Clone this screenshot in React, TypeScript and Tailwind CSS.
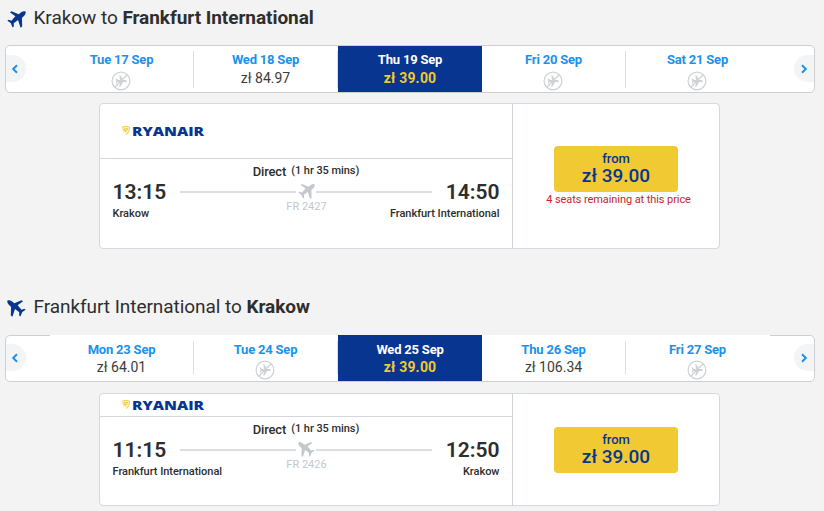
import clsx from "clsx";

type Fare = { date: string; price?: string; selected?: boolean };

type Trip = {
  from: string;
  to: string;
  inbound?: boolean;
  fares: Fare[];
  departs: string;
  arrives: string;
  flight: string;
  price: string;
  seats?: string;
};

const OUTBOUND: Trip = {
  from: "Krakow",
  to: "Frankfurt International",
  fares: [
    { date: "Tue 17 Sep" },
    { date: "Wed 18 Sep", price: "zł 84.97" },
    { date: "Thu 19 Sep", price: "zł 39.00", selected: true },
    { date: "Fri 20 Sep" },
    { date: "Sat 21 Sep" },
  ],
  departs: "13:15",
  arrives: "14:50",
  flight: "FR 2427",
  price: "zł 39.00",
  seats: "4 seats remaining at this price",
};

const INBOUND: Trip = {
  from: "Frankfurt International",
  to: "Krakow",
  inbound: true,
  fares: [
    { date: "Mon 23 Sep", price: "zł 64.01" },
    { date: "Tue 24 Sep" },
    { date: "Wed 25 Sep", price: "zł 39.00", selected: true },
    { date: "Thu 26 Sep", price: "zł 106.34" },
    { date: "Fri 27 Sep" },
  ],
  departs: "11:15",
  arrives: "12:50",
  flight: "FR 2426",
  price: "zł 39.00",
};

function Plane({ className, inbound }: { className?: string; inbound?: boolean }) {
  return (
    <svg viewBox="0 0 20 20" className={clsx("shrink-0", className)} fill="currentColor">
      <g transform={inbound ? "translate(20 0) scale(-1 1)" : undefined}>
        <path d="M19.500 1.700c-1.200-.8-2.900-.4-4.200.5L12.300 4.400 4.800 1.200 3.100 2.300l5.700 4.300-4.100 4.600-3-.9-1.300.9 3.500 2.500 2 4.700 1.300-1-.1-3.500 4.500-3.300 2.700 8.100 1.700-1.300-.3-9.100 2.600-2.500c1.200-1.200 1.600-2.900 1.200-4.100z" />
      </g>
    </svg>
  );
}

function NoFlight() {
  return (
    <svg viewBox="0 0 20 20" className="size-5 shrink-0 text-[#cfd2d5]" fill="none" stroke="currentColor">
      <circle cx="10" cy="10" r="8.900" strokeWidth="1.200" />
      <path
        fill="currentColor"
        stroke="none"
        d="M15.800 10c0-.7-.7-1.100-1.500-1.100h-2.200L9.500 4.600H8.200l1.100 4.300H6.900L5.800 7.500h-1l.6 2.500-.6 2.500h1l1.100-1.400h2.400l-1.100 4.300h1.300l2.600-4.300h2.200c.8 0 1.500-.4 1.500-1.100z"
      />
      <path d="M4 16 16 4" strokeWidth="1.200" />
    </svg>
  );
}

function Logo() {
  return (
    <div className="flex items-center">
      <svg viewBox="0 0 11 12" className="h-3 w-[11px]">
        <path d="M1 2.200Q5 .2 9 2.200 9.200 6.500 5.400 10 2 7 1 2.200z" fill="#fdf6da" />
        <path
          d="M.8 2.200Q5 .4 8.700 2.200L8 6 5.400 9.800M1.200 3.500l2.300 3M2.500 5l3.500.3 1-1.800-4-.3L5 7.500"
          fill="none"
          stroke="#f1c933"
          strokeWidth=".9"
        />
      </svg>
      <svg viewBox="0 0 73 20" className="h-5 w-[73px]">
        <text
          x="0"
          y="14.500"
          textLength="72"
          lengthAdjust="spacingAndGlyphs"
          fill="#073590"
          className="font-['Open_Sans',sans-serif] text-[12px] font-extrabold"
        >
          RYANAIR
        </text>
      </svg>
    </div>
  );
}

function NavButton({ next, inbound }: { next?: boolean; inbound?: boolean }) {
  return (
    <div className={clsx("flex flex-1 items-center", next && "justify-end", inbound ? "pb-0.5" : "pb-px")}>
      <button
        className={clsx(
          "flex h-[27px] w-5 items-center bg-[#f3f4f6]",
          next ? "justify-center rounded-l-full" : "rounded-r-full pl-[5px]",
        )}
      >
        <svg
          viewBox="0 0 8 10"
          className={clsx("h-2.5 w-2", next && "rotate-180")}
          fill="none"
          stroke="#2091eb"
          strokeWidth="2"
        >
          <path d="M6 1.200 2.200 5 6 8.800" />
        </svg>
      </button>
    </div>
  );
}

function DateStrip({ fares, inbound }: { fares: Fare[]; inbound?: boolean }) {
  return (
    <div
      className={clsx(
        "ml-[5px] flex w-[810px] rounded-[5px] border border-[#cdcfd3] bg-white",
        inbound ? "h-[47px]" : "h-12",
      )}
    >
      <NavButton inbound={inbound} />
      {fares.map((fare, i) => (
        <div
          key={fare.date}
          className={clsx(
            "flex w-36 shrink-0 justify-center",
            inbound && "-mt-px",
            fare.selected ? "bg-[#073590]" : "bg-white",
          )}
        >
          <div
            className={clsx(
              "flex flex-1 flex-col items-center",
              inbound ? "mt-1.5 h-[33px]" : "mt-[5px] h-[37px]",
              !fare.selected && "border-r",
              i < 4 ? "border-[#dcdee2]" : "border-transparent",
            )}
          >
            <span
              className={clsx(
                "text-[13px] leading-[18px] font-bold tracking-[-0.2px]",
                fare.selected ? "text-white" : "text-[#2091eb]",
              )}
            >
              {fare.date}
            </span>
            {fare.price ? (
              <span
                className={clsx(
                  "text-sm",
                  inbound ? "leading-[17px]" : "leading-[19px]",
                  fare.selected ? "font-bold tracking-[0.2px] text-[#f1c933]" : "text-[#3c3c3c]",
                )}
              >
                {fare.price}
              </span>
            ) : (
              <div className={clsx("-mb-1 pr-px", inbound ? "mt-px" : "mt-0.5")}>
                <NoFlight />
              </div>
            )}
          </div>
        </div>
      ))}
      <NavButton next inbound={inbound} />
    </div>
  );
}

function FlightCard({ trip }: { trip: Trip }) {
  const { inbound } = trip;
  return (
    <div
      className={clsx(
        "ml-[99px] flex w-[621px] rounded border border-[#d4d8df] bg-white",
        inbound ? "mt-[11px] h-[113px]" : "mt-2.5 h-[146px]",
      )}
    >
      <div className="flex w-[413px] flex-col border-r border-[#cfd3da]">
        <div
          className={clsx(
            "flex items-center border-b border-[#d4d8df] pl-[21px]",
            inbound ? "h-[23px]" : "h-[55px]",
          )}
        >
          <Logo />
        </div>
        <div className="flex flex-col pr-[12.5px] pl-[12.5px]">
          <div className="mt-1 flex h-4 justify-center gap-[5px] text-[#2e2e2e]">
            <span className="pt-px text-[13px] leading-4 font-medium tracking-[-0.15px]">Direct</span>
            <span className="text-[11px] leading-[15px] font-medium tracking-[-0.05px]">(1 hr 35 mins)</span>
          </div>
          <div className="flex h-[27px] items-start">
            <span className="w-[67.5px] text-[21px] leading-[26px] font-semibold text-[#2e2e2e]">{trip.departs}</span>
            <div className="flex w-[252px] flex-col items-center pt-1">
              <div className="flex w-full items-center justify-between">
                <span className="h-0.5 w-[116px] bg-[#dcdee2]" />
                <Plane inbound={inbound} className="size-[17px] text-[#c3c8ce]" />
                <span className="h-0.5 w-[116px] bg-[#dcdee2]" />
              </div>
              <span className="pl-px text-[11px] leading-[14px] text-[#c3c8ce]">{trip.flight}</span>
            </div>
            <span className="flex-1 text-right text-[21px] leading-[26px] font-semibold text-[#2e2e2e]">
              {trip.arrives}
            </span>
          </div>
          <div className="flex justify-between text-[11px] leading-4 font-medium tracking-[-0.03px] text-[#2e2e2e]">
            <span>{trip.from}</span>
            <span>{trip.to}</span>
          </div>
        </div>
      </div>
      <div className={clsx("flex flex-1 flex-col items-center", inbound ? "pt-[33px]" : "pt-[42px]")}>
        <button className="flex h-[46px] w-[124px] flex-col items-center rounded bg-[#f1c933] pt-[5px] font-medium text-[#073590]">
          <span className="text-[13px] leading-[15px]">from</span>
          <span className="text-[19px] leading-5">{trip.price}</span>
        </button>
        {trip.seats && (
          <span className="pl-[5px] text-[11px] leading-[15px] tracking-[-0.08px] text-[#c9252c]">{trip.seats}</span>
        )}
      </div>
    </div>
  );
}

function TripSection({ trip }: { trip: Trip }) {
  return (
    <section>
      <h2
        className={clsx(
          "flex items-start gap-[7.5px] pl-[7px] text-[19px] leading-[22px] text-[#2e2e2e]",
          trip.inbound ? "h-[39px]" : "h-[38px]",
        )}
      >
        <Plane inbound={trip.inbound} className="mt-[2.500px] size-[19px] text-[#073590]" />
        <span className="tracking-[-0.05px]">
          {trip.from} to <b className="font-bold">{trip.to}</b>
        </span>
      </h2>
      <DateStrip fares={trip.fares} inbound={trip.inbound} />
      <FlightCard trip={trip} />
    </section>
  );
}

export default function App() {
  return (
    <main className="flex h-[511px] w-[824px] flex-col gap-[47px] overflow-hidden bg-[#f3f3f3] pt-[7px] font-[Roboto,sans-serif]">
      <TripSection trip={OUTBOUND} />
      <TripSection trip={INBOUND} />
    </main>
  );
}
